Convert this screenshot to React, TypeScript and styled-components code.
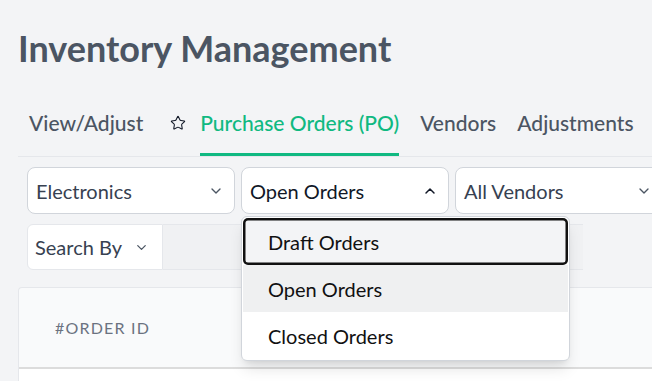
import React from "react";
import styled, { createGlobalStyle } from "styled-components";
import { ChevronDown, ChevronUp, Star } from "lucide-react";

const GlobalStyle = createGlobalStyle`
  html, body { margin: 0; padding: 0; background: #f3f4f6; }
  body { font-family: "Lato", "Liberation Sans", sans-serif; }
  * { box-sizing: border-box; }
`;

const Page = styled.div`
  width: 652px;
  height: 381px;
  overflow: hidden;
  padding-left: 18px;
  position: relative;
`;

const Title = styled.h1`
  margin: 0;
  padding-top: 26px;
  font-size: 36px;
  line-height: 44px;
  font-weight: 700;
  color: #4b5563;
  white-space: nowrap;
`;

const Tabs = styled.nav`
  display: flex;
  align-items: flex-end;
  margin-top: 41px;
  border-bottom: 1px solid #e5e7eb;
  white-space: nowrap;
`;

const Tab = styled.div<{ $active?: boolean; $first?: boolean }>`
  font-size: 21px;
  line-height: 24px;
  font-weight: 500;
  padding-bottom: 18px;
  margin-left: ${(p) => (p.$first ? "11px" : "21px")};
  border-bottom: 3px solid ${(p) => (p.$active ? "#10b981" : "transparent")};
  color: ${(p) => (p.$active ? "#10b981" : "#4b5563")};
`;

const StarButton = styled.div`
  display: flex;
  align-items: center;
  height: 24px;
  margin: 0 14px 21px 27px;
  color: #111827;
`;

const FilterRow = styled.div`
  display: flex;
  gap: 6px;
  margin-top: 10px;
  padding-left: 9px;
`;

const Select = styled.div<{ $open?: boolean }>`
  position: relative;
  flex: 0 0 208px;
  height: 47px;
  display: flex;
  align-items: center;
  justify-content: space-between;
  padding: 0 10px 0 8px;
  background: #fff;
  border: 1px solid #d1d5db;
  border-radius: 8px;
  font-size: 20px;
  color: ${(p) => (p.$open ? "#111827" : "#374151")};
  white-space: nowrap;
`;

const SearchRow = styled.div`
  display: flex;
  margin-top: 10px;
  padding-left: 9px;
`;

const SearchBy = styled.div`
  flex: 0 0 136px;
  height: 46px;
  display: flex;
  align-items: center;
  gap: 12px;
  padding-left: 7px;
  background: #fff;
  border: 1px solid #e5e7eb;
  border-radius: 6px 0 0 6px;
  font-size: 20px;
  color: #374151;
  white-space: nowrap;
`;

const SearchInput = styled.div`
  flex: 0 0 420px;
  height: 46px;
  background: #f0f1f3;
  border-top: 1px solid #e5e7eb;
  border-bottom: 1px solid #e5e7eb;
`;

const Card = styled.div`
  margin-top: 17px;
  background: #f9fafb;
  border-top: 1px solid #e5e7eb;
  border-left: 1px solid #e5e7eb;
  border-top-left-radius: 4px;
`;

const HeaderRow = styled.div`
  height: 81px;
  display: flex;
  align-items: center;
  padding-left: 36px;
  border-bottom: 2px solid #dcdcdc;
`;

const HeaderCell = styled.div`
  font-size: 16px;
  letter-spacing: 1.2px;
  color: #6b7280;
`;

const BodyRow = styled.div`
  height: 20px;
  background: #fff;
`;

const Menu = styled.div`
  position: absolute;
  left: 241px;
  top: 216px;
  width: 329px;
  padding: 1px;
  background: #fff;
  border: 1px solid #d1d5db;
  border-radius: 6px;
  box-shadow: 0 10px 15px -3px rgba(0, 0, 0, 0.12), 0 4px 6px -4px rgba(0, 0, 0, 0.1);
  overflow: hidden;
`;

const Option = styled.div<{ $focused?: boolean; $selected?: boolean }>`
  height: 47px;
  display: flex;
  align-items: center;
  padding-left: 25px;
  font-size: 20px;
  color: #111;
  background: ${(p) => (p.$focused ? "#f3f4f6" : p.$selected ? "#eff0f1" : "#fff")};
  box-shadow: ${(p) => (p.$focused ? "inset 0 0 0 2.5px #111" : "none")};
  border-radius: ${(p) => (p.$focused ? "5px" : "0")};
`;

export default function App() {
  return (
    <Page>
      <GlobalStyle />
      <Title>Inventory Management</Title>
      <Tabs>
        <Tab $first>View/Adjust</Tab>
        <StarButton>
          <Star size={16} strokeWidth={1.6} />
        </StarButton>
        <Tab $active style={{ marginLeft: 0 }}>Purchase Orders (PO)</Tab>
        <Tab>Vendors</Tab>
        <Tab>Adjustments</Tab>
      </Tabs>
      <FilterRow>
        <Select>
          Electronics
          <ChevronDown size={16} color="#4b5563" />
        </Select>
        <Select $open>
          Open Orders
          <ChevronUp size={16} color="#111827" strokeWidth={2.2} />
        </Select>
        <Select>
          All Vendors
          <ChevronDown size={16} color="#4b5563" />
        </Select>
      </FilterRow>
      <SearchRow>
        <SearchBy>
          Search By
          <ChevronDown size={15} color="#4b5563" />
        </SearchBy>
        <SearchInput />
      </SearchRow>
      <Card>
        <HeaderRow>
          <HeaderCell>#ORDER ID</HeaderCell>
        </HeaderRow>
        <BodyRow />
      </Card>
      <Menu>
        <Option $focused>Draft Orders</Option>
        <Option $selected>Open Orders</Option>
        <Option>Closed Orders</Option>
      </Menu>
    </Page>
  );
}
